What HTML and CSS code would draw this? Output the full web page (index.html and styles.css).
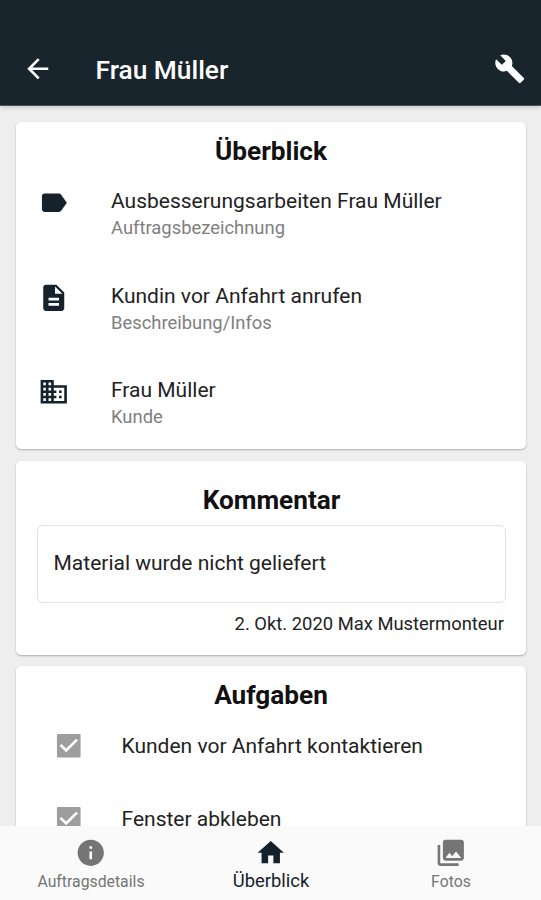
FILE: index.html
```html
<!DOCTYPE html>
<html lang="de">
<head>
<meta charset="utf-8">
<title>Frau Müller</title>
<link rel="stylesheet" href="styles.css">
</head>
<body>
<header class="appbar">
  <svg class="icon" viewBox="0 0 24 24"><path d="M20 11H7.830l5.590-5.590L12 4l-8 8 8 8 1.410-1.410L7.830 13H20v-2z"/></svg>
  <h1 class="appbar-title">Frau Müller</h1>
  <svg class="icon" viewBox="0 0 24 24"><path d="M22.7 19l-9.1-9.1c.9-2.3.4-5-1.5-6.9-2-2-5-2.4-7.4-1.3L9 6 6 9 1.6 4.7C.4 7.1.9 10.1 2.9 12.1c1.9 1.9 4.6 2.4 6.9 1.5l9.1 9.1c.4.4 1 .4 1.4 0l2.3-2.3c.5-.4.5-1.1.1-1.4z"/></svg>
</header>
<main class="content">
  <section class="card overview">
    <h2 class="heading">Überblick</h2>
    <ul class="list">
      <li class="item">
        <svg class="icon" viewBox="0 0 24 24"><path d="M17.63 5.84C17.27 5.33 16.67 5 16 5L5 5.01C3.9 5.01 3 5.9 3 7v10c0 1.1.9 1.99 2 1.99L16 19c.67 0 1.27-.33 1.63-.84L22 12l-4.37-6.16z"/></svg>
        <div><p class="primary">Ausbesserungsarbeiten Frau Müller</p><p class="secondary">Auftragsbezeichnung</p></div>
      </li>
      <li class="item">
        <svg class="icon" viewBox="0 0 24 24"><path d="M14 2H6c-1.1 0-2 .9-2 2v16c0 1.1.89 2 1.99 2H18c1.1 0 2-.9 2-2V8l-6-6zm2 16H8v-2h8v2zm0-4H8v-2h8v2zm-3-5V3.500L18.500 9H13z"/></svg>
        <div><p class="primary">Kundin vor Anfahrt anrufen</p><p class="secondary">Beschreibung/Infos</p></div>
      </li>
      <li class="item">
        <svg class="icon" viewBox="0 0 24 24"><path d="M12 7V3H2v18h20V7H12zM6 19H4v-2h2v2zm0-4H4v-2h2v2zm0-4H4V9h2v2zm0-4H4V5h2v2zm4 12H8v-2h2v2zm0-4H8v-2h2v2zm0-4H8V9h2v2zm0-4H8V5h2v2zm10 12h-8v-2h2v-2h-2v-2h2v-2h-2V9h8v10zm-2-8h-2v2h2v-2zm0 4h-2v2h2v-2z"/></svg>
        <div><p class="primary">Frau Müller</p><p class="secondary">Kunde</p></div>
      </li>
    </ul>
  </section>
  <section class="card comment">
    <h2 class="heading">Kommentar</h2>
    <p class="comment-box">Material wurde nicht geliefert</p>
    <p class="comment-meta">2. Okt. 2020 Max Mustermonteur</p>
  </section>
  <section class="card tasks">
    <h2 class="heading">Aufgaben</h2>
    <ul class="list">
      <li class="task">
        <svg class="icon" viewBox="0 0 24 24"><path d="M20 3H4c-.6 0-1 .4-1 1v16c0 .6.4 1 1 1h16c.6 0 1-.4 1-1V4c0-.6-.4-1-1-1zM10 17l-5-5 1.410-1.410L10 14.170l7.590-7.590L19 8l-9 9z"/></svg>
        <span>Kunden vor Anfahrt kontaktieren</span>
      </li>
      <li class="task">
        <svg class="icon" viewBox="0 0 24 24"><path d="M20 3H4c-.6 0-1 .4-1 1v16c0 .6.4 1 1 1h16c.6 0 1-.4 1-1V4c0-.6-.4-1-1-1zM10 17l-5-5 1.410-1.410L10 14.170l7.590-7.590L19 8l-9 9z"/></svg>
        <span>Fenster abkleben</span>
      </li>
    </ul>
  </section>
</main>
<nav class="tabs">
  <a class="tab">
    <svg class="icon" viewBox="0 0 24 24"><path d="M12 2C6.480 2 2 6.480 2 12s4.480 10 10 10 10-4.480 10-10S17.520 2 12 2zm1 15h-2v-6h2v6zm0-8h-2V7h2v2z"/></svg>
    <span>Auftragsdetails</span>
  </a>
  <a class="tab active">
    <svg class="icon" viewBox="0 0 24 24"><path d="M10 20v-6h4v6h5v-8h3L12 3 2 12h3v8z"/></svg>
    <span>Überblick</span>
  </a>
  <a class="tab">
    <svg class="icon" viewBox="0 0 24 24"><path d="M22 16V4c0-1.100-.9-2-2-2H8c-1.100 0-2 .9-2 2v12c0 1.100.9 2 2 2h12c1.100 0 2-.9 2-2zm-11-4l2.030 2.710L16 11l4 5H8l3-4zM2 6v14c0 1.100.9 2 2 2h14v-2H4V6H2z"/></svg>
    <span>Fotos</span>
  </a>
</nav>
</body>
</html>
```
FILE: styles.css
```css
* { box-sizing: border-box; margin: 0; padding: 0; }

body {
  display: flex;
  flex-direction: column;
  height: 900px;
  overflow: hidden;
  background: #eeeeee;
  color: #222;
  font-family: Roboto, "Liberation Sans", sans-serif;
  font-size: 21px;
}

.icon { width: 31.5px; height: 31.5px; flex: none; display: block; fill: currentColor; }

.appbar {
  position: relative;
  flex: none;
  display: flex;
  align-items: center;
  height: 106px;
  padding: 33px 16px 0 21.5px;
  background: #18252d;
  color: #fff;
  border-bottom: 1px solid #4b555b;
  box-shadow: 0 1px 5px rgba(0, 0, 0, 0.2);
}

.appbar-title {
  flex: 1;
  margin-left: 42.5px;
  padding-top: 2px;
  font-size: 26.3px;
  font-weight: 500;
  line-height: 32px;
}

.content {
  flex: 1;
  min-height: 0;
  overflow: hidden;
  display: flex;
  flex-direction: column;
  padding: 16px 15px 0 16px;
}

.card {
  flex: none;
  background: #fff;
  border-radius: 5px;
  box-shadow: 0 1px 2px rgba(0, 0, 0, 0.28);
}

.overview { height: 327px; padding-top: 13px; }
.comment { height: 194px; margin-top: 12px; padding: 23px 20px 0 21px; }
.tasks { height: 327px; margin-top: 11px; padding-top: 13px; }

.heading { text-align: center; font-size: 26.2px; font-weight: 700; line-height: 32px; color: #111; }
.list { list-style: none; }

.overview .list { padding-top: 20px; }
.item { display: flex; height: 94.7px; padding-left: 21.5px; }
.item .icon { color: #15222b; }
.item > div { margin-left: 42px; }
.primary { line-height: 28px; }
.secondary { font-size: 18.4px; line-height: 26px; color: #808080; }

.comment-box {
  height: 78px;
  margin-top: 9px;
  padding-left: 15.5px;
  border: 1px solid #e2e2e2;
  border-radius: 6px;
  line-height: 74px;
}
.comment-meta { margin-top: 8px; padding-right: 2px; text-align: right; font-size: 18.4px; line-height: 26px; }

.tasks .list { padding-top: 19px; }
.task { display: flex; align-items: center; height: 32px; margin-bottom: 41px; padding-left: 37px; }
.task .icon { color: #9e9e9e; }
.task span { margin-left: 37px; }

.tabs { flex: none; display: flex; height: 74px; padding-left: 1px; background: #fafafa; color: #757575; }
.tab {
  flex: 1;
  display: flex;
  flex-direction: column;
  align-items: center;
  padding-top: 11px;
  font-size: 15.8px;
  line-height: 25px;
}
.active { color: #15222b; font-size: 18.4px; line-height: 23px; }
```
